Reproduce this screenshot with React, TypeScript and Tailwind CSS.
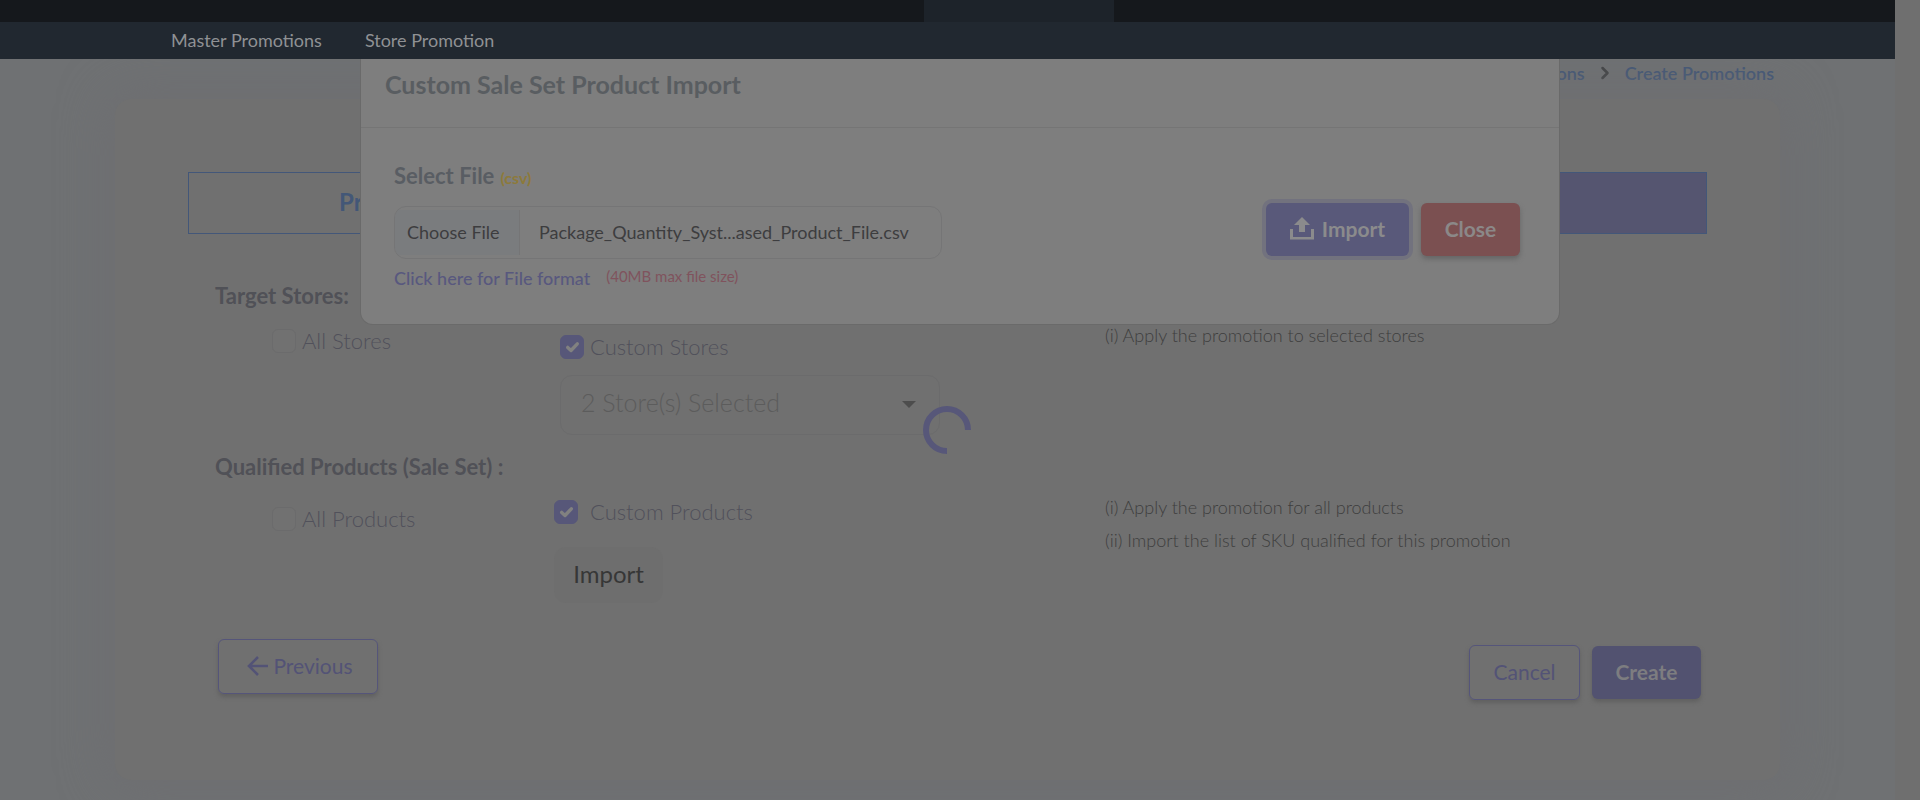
import type { ReactNode } from "react";
import { ChevronRight } from "lucide-react";

type CheckProps = { id: string; label: string; checked?: boolean; gap?: string };

function Check({ id, label, checked = false, gap = "gap-1.5" }: CheckProps) {
  return (
    <div className={`flex items-center ${gap}`}>
      <span className="relative flex size-6 shrink-0">
        <input
          id={id}
          type="checkbox"
          defaultChecked={checked}
          className="peer size-6 appearance-none rounded-md border border-[#6b6b6c] bg-[#717171] checked:border-[#575779] checked:bg-[#575779]"
        />
        <svg viewBox="0 0 24 24" className="pointer-events-none absolute inset-0 hidden size-6 peer-checked:block" fill="none" stroke="#818180" strokeWidth="3.4" strokeLinecap="round" strokeLinejoin="round">
          <path d="M7.7 12.4 L11 15.5 L17.3 8.8" />
        </svg>
      </span>
      <label htmlFor={id} className="text-[22px]/6 font-light text-[#51515b]">{label}</label>
    </div>
  );
}

function Note({ children }: { children: ReactNode }) {
  return <p className="text-lg/[33px] font-light text-[#3e3e3e]">{children}</p>;
}

function UploadIcon() {
  return (
    <svg viewBox="0 0 24 23" className="h-[23px] w-6" fill="currentColor">
      <path d="M12 0 L20 8 H15 V15 H9 V8 H4 Z" />
      <path d="M0 12 H3 V20 H21 V12 H24 V22.5 H0 Z" />
    </svg>
  );
}

function BackIcon() {
  return (
    <svg viewBox="0 0 22 20" className="h-5 w-[22px]" fill="none" stroke="currentColor" strokeWidth="2.6">
      <path d="M11 1 L2 10 L11 19 M2 10 H21" />
    </svg>
  );
}

export default function App() {
  return (
    <div className="flex min-h-screen bg-[#6f7173] font-[Lato,'Open_Sans',sans-serif]">
      <div className="relative flex min-w-0 flex-1 flex-col overflow-hidden">
        <header className="relative z-20">
          <div className="flex h-[22px] justify-center bg-[#15181c] pl-[143px]">
            <div className="w-[190px] bg-[#1d232a]" />
          </div>
          <nav className="flex h-[37px] items-center gap-[43px] bg-[#212830] pb-0.5 pl-[171px] text-lg text-[#8f9194]">
            <a href="#master">Master Promotions</a>
            <a href="#store">Store Promotion</a>
          </nav>
        </header>

        <div className="flex h-10 items-start justify-end gap-2.5 pr-[121px] text-lg/7 font-semibold text-[#435777]">
          <a href="#promotions">Promotions</a>
          <ChevronRight className="mt-1 size-5 text-[#404244]" strokeWidth={3} />
          <a href="#create">Create Promotions</a>
        </div>

        <main className="mx-[115px] mb-5 flex-1 rounded-2xl bg-[#707070] px-[73px] pt-[73px] shadow-[0_0_50px_4px_#6e6e71]">
          <div className="grid h-[62px] grid-cols-3">
            <button className="border border-[#435779] pb-0.5 text-2xl/7 font-bold text-[#435777]">Promotions Details</button>
            <button className="col-span-2 border border-[#435779] bg-[#555570]" aria-label="Products" />
          </div>

          <form className="pl-[27px] pt-12">
            <h2 className="text-[22px]/7 font-bold text-[#505157]">Target Stores:</h2>
            <div className="grid grid-cols-[345px_545px_1fr] pt-[9px]">
              <div className="pl-[57px] pt-[10px]">
                <Check id="all-stores" label="All Stores" />
              </div>
              <div className="pt-4">
                <Check id="custom-stores" label="Custom Stores" checked />
                <div className="relative mt-4 w-[380px]">
                  <select aria-label="Stores" className="h-[60px] w-full appearance-none rounded-xl border border-[#6b6b6c] bg-transparent px-5 pb-1 text-[25px] font-light text-[#5c5c5c]">
                    <option>2 Store(s) Selected</option>
                  </select>
                  <svg viewBox="0 0 14 7" className="pointer-events-none absolute right-6 top-[26px] h-[7px] w-3.5" fill="#4d4d4d">
                    <path d="M0 0 H14 L7 7 Z" />
                  </svg>
                </div>
              </div>
              <Note>(i) Apply the promotion to selected stores</Note>
            </div>

            <h2 className="pt-[18px] text-[22px]/7 font-bold text-[#505157]">Qualified Products (Sale Set) :</h2>
            <div className="grid grid-cols-[345px_545px_1fr] pt-[10px]">
              <div className="pl-[57px] pt-4">
                <Check id="all-products" label="All Products" />
              </div>
              <div className="-ml-1.5 pt-[9px]">
                <Check id="custom-products" label="Custom Products" checked gap="gap-3" />
                <button type="button" className="mt-[23px] h-14 w-[109px] rounded-xl bg-[#6e6e6e] pb-0.5 text-2xl text-[#373737]">Import</button>
              </div>
              <div>
                <Note>(i) Apply the promotion for all products</Note>
                <Note>(ii) Import the list of SKU qualified for this promotion</Note>
              </div>
            </div>

            <div className="flex items-start justify-between pl-[3px] pr-1.5 pt-9">
              <button type="button" className="flex h-[55px] w-[160px] items-center justify-center gap-1 rounded-md border border-[#55557a] pb-0.5 pl-1 text-[21px] text-[#535376] shadow-[0_3px_4px_#606060]">
                <BackIcon />
                Previous
              </button>
              <div className="flex items-center gap-3 pt-1.5">
                <button type="button" className="h-[55px] w-[111px] rounded-md border border-[#55557a] pb-0.5 text-[21px] text-[#535376] shadow-[0_3px_4px_#606060]">Cancel</button>
                <button type="button" className="h-[53px] w-[109px] rounded-md bg-[#525270] pb-0.5 text-[21px] font-bold text-[#7d7d80] shadow-[0_3px_4px_#606060]">Create</button>
              </div>
            </div>
          </form>
        </main>

        <div className="absolute inset-x-0 top-[59px] z-10 pl-[361px] pr-[336px]">
          <div role="dialog" aria-labelledby="dialog-title" className="rounded-b-xl bg-[#7e7e7e] shadow-[0_0_0_1px_#6a6a6a]">
            <h1 id="dialog-title" className="h-[69px] border-b border-[#757575] px-6 pt-[9px] text-[25px]/8 font-bold text-[#595d61]">Custom Sale Set Product Import</h1>
            <div className="flex items-start justify-between pb-8 pl-[33px] pr-[39px] pt-[34px]">
              <div>
                <div className="flex items-baseline gap-1.5 text-[22px]/7 font-bold text-[#595d63]">
                  Select File <span className="text-base/5 text-[#8d7a3a]">(csv)</span>
                </div>
                <label className="mt-4 flex h-[53px] w-[548px] overflow-hidden rounded-xl border border-[#757576] text-lg text-[#3d3d3f]">
                  <input type="file" className="sr-only" />
                  <span className="my-[3px] flex w-[125px] items-center border-r border-[#757576] bg-[#7a7c7e] pb-0.5 pl-3">Choose File</span>
                  <span className="flex items-center pb-0.5 pl-[19px]">Package_Quantity_Syst...ased_Product_File.csv</span>
                </label>
                <div className="flex items-start gap-4 pt-[5px]">
                  <a href="#format" className="text-lg/7 font-medium text-[#58587e]">Click here for File format</a>
                  <span className="text-[15px]/6 text-[#80535d]">(40MB max file size)</span>
                </div>
              </div>
              <div className="flex gap-3 pt-[41px]">
                <button className="flex h-[53px] w-[143px] items-center justify-center gap-2 rounded-md bg-[#59597a] pb-0.5 text-[21px] font-bold text-[#8b8b8c] shadow-[0_0_0_4px_#72727e]">
                  <UploadIcon />
                  Import
                </button>
                <button className="h-[53px] w-[99px] rounded-md bg-[#7b5051] pb-0.5 text-[21px] font-bold text-[#8b8888] shadow-[0_3px_5px_#666]">Close</button>
              </div>
            </div>
          </div>
        </div>

        <div className="pointer-events-none absolute inset-x-0 top-[406px] z-30 flex justify-center pr-0.5" role="status" aria-label="Loading">
          <svg viewBox="0 0 48 48" className="size-12" fill="none" stroke="#575779" strokeWidth="6">
            <path d="M45 24 A21 21 0 1 0 24 45" />
          </svg>
        </div>
      </div>
      <div className="w-[25px] shrink-0 bg-[#6f6f6f]" />
    </div>
  );
}
